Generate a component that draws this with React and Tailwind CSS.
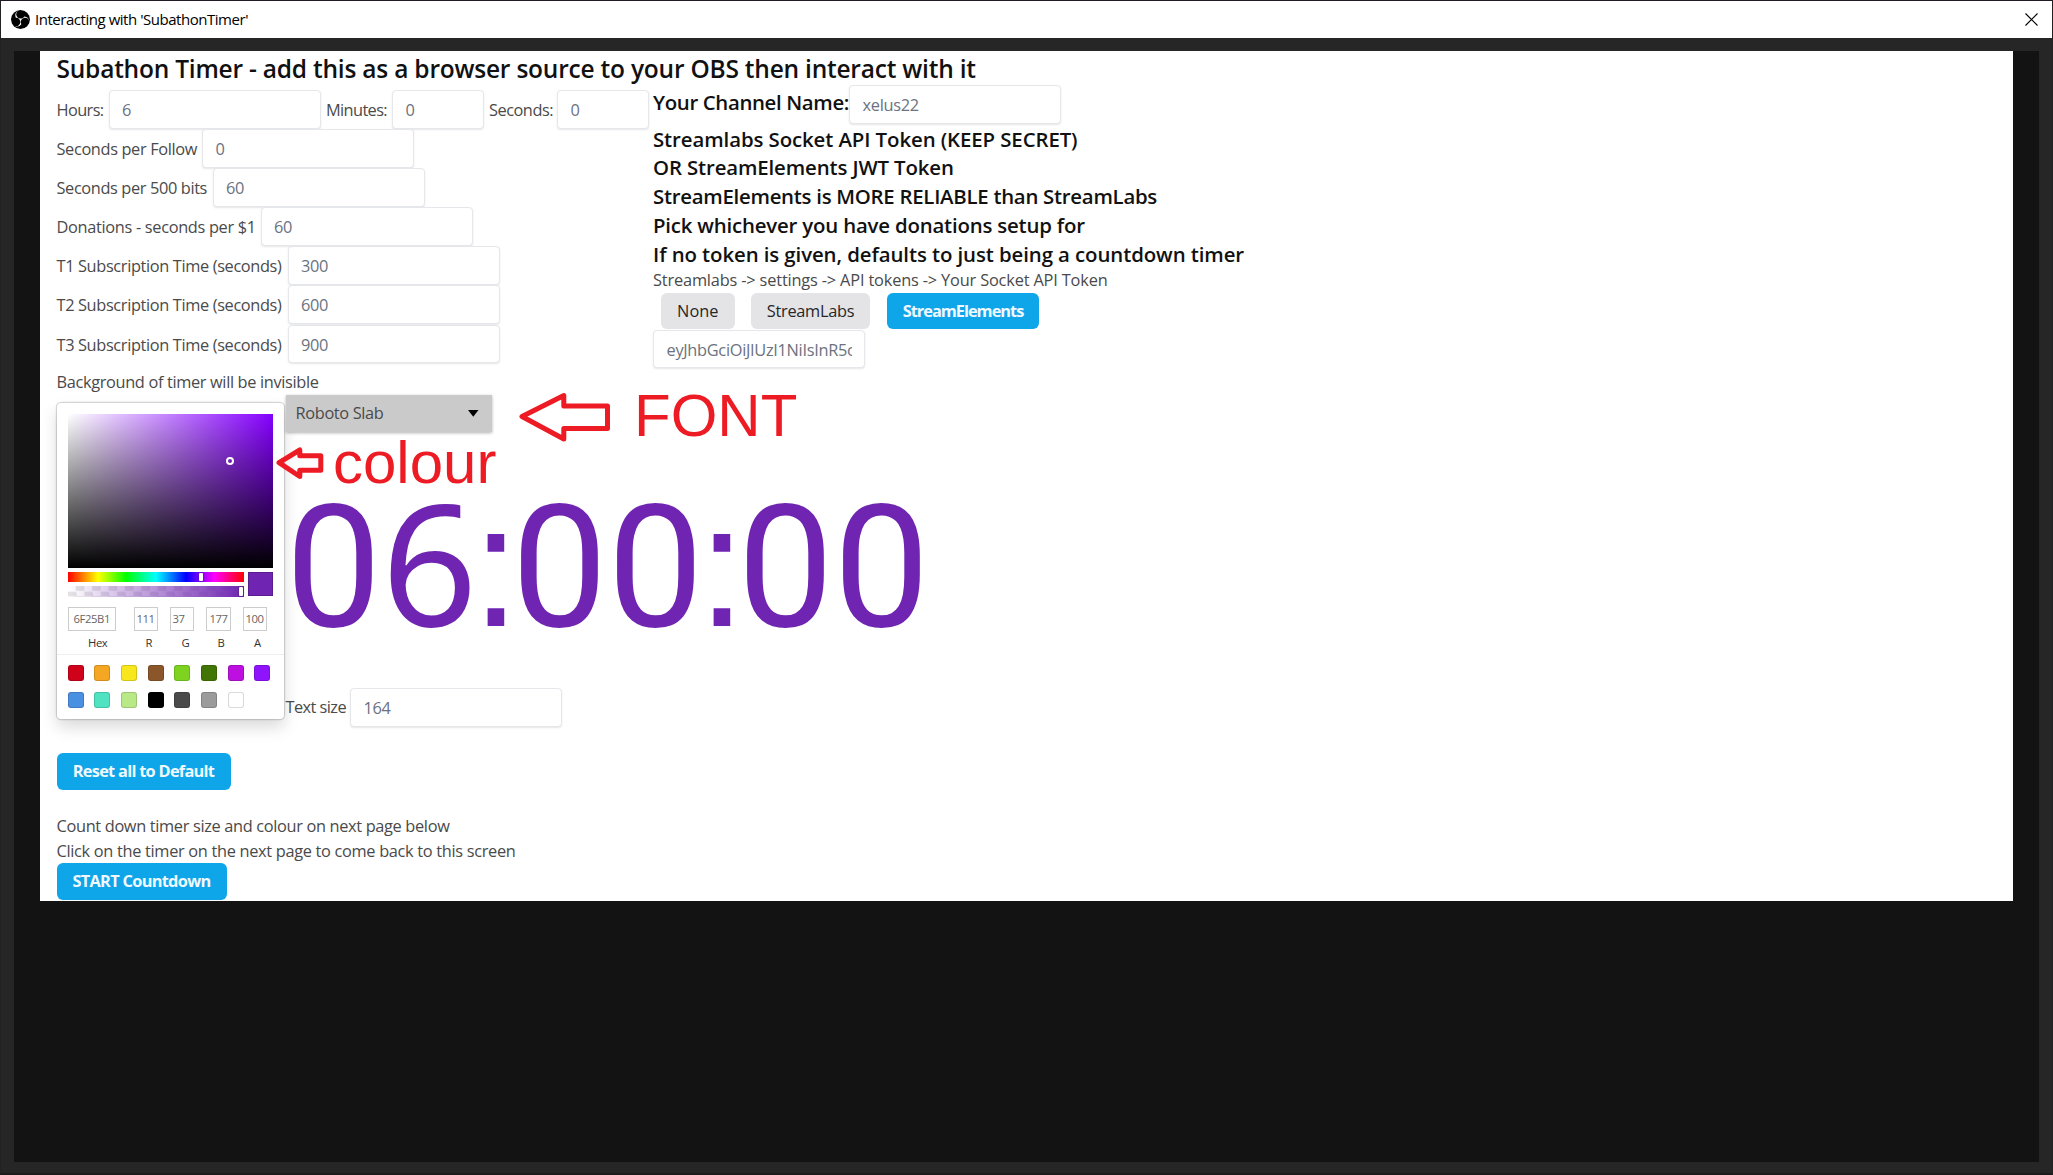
import { SiObsstudio } from "react-icons/si";

const FIELD =
  "h-[38.5px] shrink-0 overflow-hidden whitespace-nowrap rounded-[4px] border border-[#e5e7eb] bg-white px-[12.5px] text-[16.35px] leading-[38px] tracking-[-0.3px] text-[#6b7280] shadow-[0_1px_2px_rgba(0,0,0,0.1)]";

function Field({ value, className = "w-[212px]" }) {
  return (
    <div className={`${FIELD} ${className}`}>
      <div className="overflow-hidden">{value}</div>
    </div>
  );
}

const ROWS = [
  { label: "Seconds per Follow", value: "0", className: "w-[145.5px] tracking-[-0.36px]" },
  { label: "Seconds per 500 bits", value: "60", className: "w-[156px] tracking-[-0.374px]" },
  { label: "Donations - seconds per $1", value: "60", className: "w-[204px] tracking-[-0.32px]" },
  { label: "T1 Subscription Time (seconds)", value: "300", className: "w-[231px] tracking-[-0.36px]" },
  { label: "T2 Subscription Time (seconds)", value: "600", className: "w-[231px] tracking-[-0.36px]" },
  { label: "T3 Subscription Time (seconds)", value: "900", className: "w-[231px] tracking-[-0.36px]" },
];

const HEADINGS = [
  { text: "Streamlabs Socket API Token (KEEP SECRET)", className: "tracking-[-0.092px]" },
  { text: "OR StreamElements JWT Token", className: "tracking-[-0.13px]" },
  { text: "StreamElements is MORE RELIABLE than StreamLabs", className: "tracking-[-0.275px]" },
  { text: "Pick whichever you have donations setup for", className: "tracking-[-0.19px]" },
  { text: "If no token is given, defaults to just being a countdown timer", className: "tracking-[-0.089px]" },
];

const CHANNELS = [
  { value: "6F25B1", label: "Hex", box: "w-[48px] pl-[5px]", cell: "w-[66px]", text: "pl-[20.5px]" },
  { value: "111", label: "R", box: "w-[24px] pl-[2px]", cell: "w-[36px]", text: "pl-[12px]" },
  { value: "37", label: "G", box: "w-[24px] pl-[2px]", cell: "w-[36px]", text: "pl-[12px]" },
  { value: "177", label: "B", box: "w-[25px] pl-[3px]", cell: "w-[37px]", text: "pl-[12px]" },
  { value: "100", label: "A", box: "w-[24px] pl-[2px]", cell: "w-[30px]", text: "pl-[11.5px]" },
];

const SWATCHES = [
  "bg-[#d0021b]", "bg-[#f5a623]", "bg-[#f8e71c]", "bg-[#8b572a]",
  "bg-[#7ed321]", "bg-[#417505]", "bg-[#bd10e0]", "bg-[#9013fe]",
  "bg-[#4a90e2]", "bg-[#50e3c2]", "bg-[#b8e986]", "bg-[#000000]",
  "bg-[#4a4a4a]", "bg-[#9b9b9b]", "bg-[#ffffff]",
];

function ColorPicker() {
  return (
    <div className="h-[316px] w-[227px] shrink-0 rounded-[4px] bg-white pt-[11px] shadow-[0_0_0_1.2px_rgba(0,0,0,0.15),0_8px_16px_rgba(0,0,0,0.15)]">
      <div className="mx-[11px] h-[153.5px] bg-[linear-gradient(to_top,#000,transparent),linear-gradient(to_right,#fff,#8500ff)]">
        <div className="relative left-[158px] top-[43px] size-[8px] rounded-full border-2 border-white" />
      </div>
      <div className="mx-[11px] mt-[4px] flex justify-between">
        <div className="w-[176.5px]">
          <div className="flex h-[10px] bg-[linear-gradient(to_right,#f00_0%,#ff0_17%,#0f0_33%,#0ff_50%,#00f_67%,#f0f_83%,#f00_100%)] pl-[131px]">
            <div className="mt-px h-[8px] w-[4.5px] rounded-[1px] bg-white shadow-[0_0_2px_rgba(0,0,0,0.6)]" />
          </div>
          <div className="mt-[4.5px] h-[10.5px] bg-[repeating-conic-gradient(#e4e4e4_0_25%,#fff_0_50%)] bg-[length:16.4px_10.4px]">
            <div className="flex h-full justify-end bg-[linear-gradient(to_right,rgba(111,37,177,0),#6f25b1)] pr-[1px]">
              <div className="mt-px h-[8.5px] w-[4.5px] rounded-[1px] bg-white shadow-[0_0_2px_rgba(0,0,0,0.6)]" />
            </div>
          </div>
        </div>
        <div className="size-[24.5px] bg-[#6f25b1] shadow-[inset_0_0_0_1px_rgba(0,0,0,0.2)]" />
      </div>
      <div className="mt-[10px] flex pl-[11px] text-[11.3px] tracking-[-0.4px]">
        {CHANNELS.map((c) => (
          <div key={c.label} className={c.cell}>
            <div className={`h-[24px] border border-[#ccc] leading-[22px] text-[#666] ${c.box}`}>{c.value}</div>
            <div className={`leading-[23px] text-[#333] ${c.text}`}>{c.label}</div>
          </div>
        ))}
      </div>
      <div className="grid grid-cols-[repeat(8,16px)] gap-x-[10.7px] gap-y-[10.5px] border-t border-[#eee] pl-[11px] pt-[10.5px]">
        {SWATCHES.map((s) => (
          <div key={s} className={`size-[16px] rounded-[3px] shadow-[inset_0_0_0_1px_rgba(0,0,0,0.15)] ${s}`} />
        ))}
      </div>
    </div>
  );
}

function Colon() {
  return (
    <span className="-ml-[5.6px] -mr-[8.7px] font-['Liberation_Sans',sans-serif] text-[174px] leading-[0]">:</span>
  );
}

function Timer() {
  return (
    <div className="mt-[15px] h-[241.5px] whitespace-nowrap font-['Roboto',sans-serif] text-[170.8px] leading-[242px] text-[#6f25b1]">
      0<span className="font-['Noto_Sans',sans-serif] text-[167.6px] leading-[0]">6</span>
      <Colon />
      00
      <Colon />
      00
    </div>
  );
}

export default function App() {
  return (
    <div className="relative flex h-[1175px] w-[2053px] flex-col overflow-hidden border-b-2 border-l border-r border-t border-b-[#1c1c1c] border-l-[#222] border-r-[#222] border-t-[#201a24] bg-[#262626] font-['Open_Sans','Noto_Sans',sans-serif] text-[16.35px] text-[#4a4a4a]">
      <header className="flex h-[37px] shrink-0 items-center bg-white pl-[10px] pr-[14px] text-black">
        <div className="grid size-[18.5px] shrink-0 place-content-center overflow-hidden rounded-full bg-black text-white">
          <SiObsstudio className="size-[21px]" />
        </div>
        <span className="ml-[5.5px] whitespace-nowrap text-[15px] leading-[37px] tracking-[-0.463px]">
          Interacting with 'SubathonTimer'
        </span>
        <svg className="ml-auto size-[13px]" viewBox="0 0 13 13" stroke="#000" strokeWidth="1.1">
          <path d="M0.5 0.5 12.5 12.5M12.5 0.5 0.5 12.5" />
        </svg>
      </header>

      <main className="mx-[13px] mb-[11px] mt-[13px] flex-1 bg-[#131313] px-[26px]">
        <div className="h-[850px] bg-white pl-[16.5px]">
          <h1 className="h-[34px] whitespace-nowrap text-[24.5px] font-semibold leading-[36px] tracking-[-0.215px] text-[#111]">
            Subathon Timer - add this as a browser source to your OBS then interact with it
          </h1>

          <div className="flex h-[318px]">
            <section className="w-[596.5px] shrink-0 pt-[5px]">
              <div className="flex h-[39.1px] whitespace-nowrap leading-[40px]">
                <span className="w-[52px] tracking-[-0.6px]">Hours:</span>
                <Field value="6" />
                <span className="ml-[5.5px] w-[66px] tracking-[-0.62px]">Minutes:</span>
                <Field value="0" className="w-[92px]" />
                <span className="ml-[5px] w-[68px] tracking-[-0.488px]">Seconds:</span>
                <Field value="0" className="w-[92px]" />
              </div>
              {ROWS.map((r) => (
                <div key={r.label} className="flex h-[39.1px] whitespace-nowrap leading-[40px]">
                  <span className={r.className}>{r.label}</span>
                  <Field value={r.value} />
                </div>
              ))}
              <p className="whitespace-nowrap leading-[36px] tracking-[-0.348px]">Background of timer will be invisible</p>
            </section>

            <section className="flex flex-col items-start whitespace-nowrap">
              <div className="flex text-[20.4px] font-semibold text-[#111]">
                <span className="w-[196px] leading-[35px] tracking-[-0.361px]">Your Channel Name:</span>
                <div className="font-normal">
                  <Field value="xelus22" />
                </div>
              </div>
              <div className="mt-[1px] text-[20.4px] font-semibold leading-[28.8px] text-[#111]">
                {HEADINGS.map((h) => (
                  <p key={h.text} className={h.className}>{h.text}</p>
                ))}
              </div>
              <p className="leading-[24px] tracking-[-0.168px]">
                Streamlabs -&gt; settings -&gt; API tokens -&gt; Your Socket API Token
              </p>
              <div className="mt-[0.5px] flex h-[37px] pl-[8px] text-center leading-[37px]">
                <div className="h-[36.5px] w-[73.5px] rounded-[6px] bg-[#e4e4e7] text-[#27272a]">None</div>
                <div className="ml-[16.5px] h-[36.5px] w-[119px] rounded-[6px] bg-[#e4e4e7] tracking-[-0.3px] text-[#27272a]">
                  StreamLabs
                </div>
                <div className="ml-[17px] h-[36.5px] w-[152px] rounded-[6px] bg-[#0ea5e9] font-bold tracking-[-1px] text-[#f0f9ff]">
                  StreamElements
                </div>
              </div>
              <Field value="eyJhbGciOiJIUzI1NiIsInR5cCI6IkpXVCJ9" />
            </section>
          </div>

          <div className="flex h-[316px]">
            <ColorPicker />
            <div className="-mt-[8px] ml-[2px]">
              <div className="flex h-[36.5px] w-[206px] items-center justify-between bg-[#cacaca] pl-[10px] pr-[13px] leading-[37px] tracking-[-0.347px] shadow-[0_1px_3px_rgba(0,0,0,0.3)]">
                Roboto Slab
                <svg className="w-[10.5px]" viewBox="0 0 10 6.5" fill="#000">
                  <path d="M0 0H10L5 6.5Z" />
                </svg>
              </div>
              <Timer />
              <div className="flex leading-[38.5px]">
                <span className="w-[64.5px] whitespace-nowrap tracking-[-0.55px]">Text size</span>
                <Field value="164" />
              </div>
            </div>
          </div>

          <div className="mt-[34px] h-[37px] w-[174px] whitespace-nowrap rounded-[6px] bg-[#0ea5e9] text-center font-bold leading-[37px] tracking-[-0.72px] text-[#f0f9ff]">
            Reset all to Default
          </div>
          <div className="mt-[24px] whitespace-nowrap leading-[24.7px]">
            <p className="tracking-[-0.338px]">Count down timer size and colour on next page below</p>
            <p className="tracking-[-0.314px]">Click on the timer on the next page to come back to this screen</p>
          </div>
          <div className="h-[37px] w-[170px] whitespace-nowrap rounded-[6px] bg-[#0ea5e9] text-center font-bold leading-[37px] tracking-[-0.7px] text-[#f0f9ff]">
            START Countdown
          </div>
        </div>
      </main>

      <div className="absolute left-[518px] top-[384px] flex items-start font-['Liberation_Sans',sans-serif] text-[60px] leading-[60px] text-[#ed1c24]">
        <svg className="mt-[4px] h-[54px] w-[92px]" viewBox="0 0 92 54" fill="none" stroke="#ed1c24" strokeWidth="5" strokeLinejoin="round">
          <path d="M3 27.5 44.8 6.5V17H88.5V39.5H44.8V50Z" />
        </svg>
        <span className="ml-[23px] mt-px">FONT</span>
      </div>
      <div className="absolute left-[275px] top-[431px] flex items-start font-['Liberation_Sans',sans-serif] text-[60px] leading-[60px] text-[#ed1c24]">
        <svg className="mt-[12px] h-[38px] w-[50px]" viewBox="0 0 50 38" fill="none" stroke="#ed1c24" strokeWidth="5" strokeLinejoin="round">
          <path d="M3 18.7 23.8 6V11.7H44.8V26.2H23.8V32.5Z" />
        </svg>
        <span className="ml-[7px] mt-px">colour</span>
      </div>
    </div>
  );
}
